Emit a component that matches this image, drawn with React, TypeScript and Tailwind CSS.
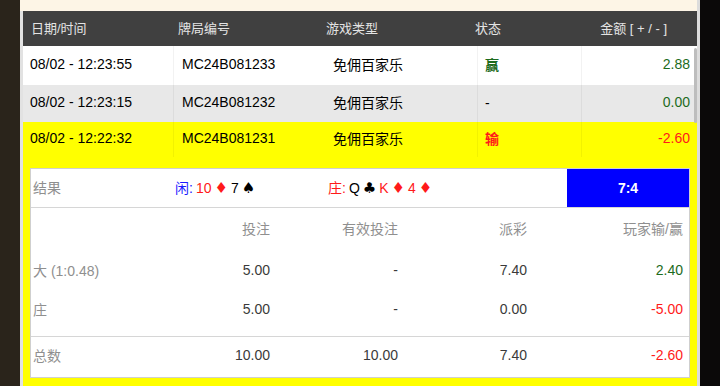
import React from "react";

const font = { fontFamily: '"Liberation Sans", Arial, "Noto Sans CJK SC", sans-serif' };

const rows = [
  { time: "08/02 - 12:23:55", id: "MC24B081233", game: "免佣百家乐", status: "赢", amount: "2.88", bg: "bg-white", statusCls: "text-[#1d6b1d] font-bold", amountCls: "text-[#1d6b1d]", h: "h-[39px]" },
  { time: "08/02 - 12:23:15", id: "MC24B081232", game: "免佣百家乐", status: "-", amount: "0.00", bg: "bg-[#e8e8e8]", statusCls: "text-black", amountCls: "text-[#1d6b1d]", h: "h-[37px]" },
  { time: "08/02 - 12:22:32", id: "MC24B081231", game: "免佣百家乐", status: "输", amount: "-2.60", bg: "bg-[#ffff00]", statusCls: "text-[#ff1a1a] font-bold", amountCls: "text-[#ff1a1a]", h: "h-[35px]" },
];

const bets = [
  { name: "大 (1:0.48)", stake: "5.00", valid: "-", payout: "7.40", win: "2.40", winCls: "text-[#1d6b1d]" },
  { name: "庄", stake: "5.00", valid: "-", payout: "0.00", win: "-5.00", winCls: "text-[#ff1a1a]" },
];

function Suit({ s, red }: { s: string; red?: boolean }) {
  return <span className={`text-[15px] leading-none ${red ? "text-[#ff1a1a]" : "text-black"}`} style={{ fontFamily: '"DejaVu Sans", sans-serif' }}>{s}</span>;
}

export default function App() {
  return (
    <div className="flex w-[720px] h-[386px] overflow-hidden bg-[#0b0909]" style={font}>
      <div className="w-[20px] shrink-0 bg-[#2a241b]" />
      <div className="w-[677px] shrink-0 flex flex-col">
        <div className="h-[11px] bg-[#fdf5e6]" />
        <div className="flex-1 border-l-[3px] border-[#e2e2e2] flex flex-col bg-[#ffff00] relative">
          {/* header */}
          <div className="h-[35px] bg-[#404040] text-[#e4e4e4] text-[13px] flex items-center">
            <div className="w-[147px] pl-[8px]">日期/时间</div>
            <div className="w-[148px] pl-[8px]">牌局编号</div>
            <div className="w-[149px] pl-[8px]">游戏类型</div>
            <div className="w-[100px] pl-[8px]">状态</div>
            <div className="flex-1 text-right pr-[30px]">金额 [ + / - ]</div>
          </div>

          {rows.map((r) => (
            <div key={r.id} className={`flex items-center text-[14px] text-black ${r.bg} ${r.h}`}>
              <div className="w-[151px] h-full flex items-center pl-[7px] pb-[3px] border-r border-black/5">{r.time}</div>
              <div className="w-[152px] h-full flex items-center pl-[8px] pb-[3px]">{r.id}</div>
              <div className="w-[152px] h-full flex items-center pl-[7px] pb-[1px] border-r border-black/5">{r.game}</div>
              <div className={`w-[104px] h-full flex items-center pl-[7px] pb-[1px] border-r border-black/5 ${r.statusCls}`}>{r.status}</div>
              <div className={`flex-1 h-full flex items-center justify-end pr-[7px] pb-[3px] ${r.amountCls}`}>{r.amount}</div>
            </div>
          ))}

          {/* expanded detail */}
          <div className="flex-1 pt-[11px] pl-[7px] pr-[7px] pb-[8px]">
            <div className="h-full bg-white border border-[#cfcfcf] flex flex-col text-[14px]">
              <div className="h-[39px] flex items-stretch border-b border-[#d6d6d6]">
                <div className="w-[140px] pl-[2px] flex items-center text-[#8f8f8f]">结果</div>
                <div className="w-[153px] pl-[4px] flex items-center gap-[3px]">
                  <span className="text-[#1a1aff]">闲:</span>
                  <span className="text-[#ff1a1a]">10</span>
                  <Suit s="♦" red />
                  <span className="text-black">7</span>
                  <Suit s="♠" />
                </div>
                <div className="flex-1 pl-[4px] flex items-center gap-[3px]">
                  <span className="text-[#ff1a1a]">庄:</span>
                  <span className="text-black">Q</span>
                  <Suit s="♣" />
                  <span className="text-[#ff1a1a]">K</span>
                  <Suit s="♦" red />
                  <span className="text-[#ff1a1a]">4</span>
                  <Suit s="♦" red />
                </div>
                <div className="w-[122px] bg-[#0000ff] text-white font-bold flex items-center justify-center">7:4</div>
              </div>

              <div className="grid grid-cols-[107px_130px_128px_129px_1fr] pl-[2px] pr-[6px] h-[42px] items-center text-[#8f8f8f]">
                <div />
                <div className="text-right">投注</div>
                <div className="text-right">有效投注</div>
                <div className="text-right">派彩</div>
                <div className="text-right">玩家输/赢</div>
              </div>

              {bets.map((b, i) => (
                <div key={b.name} className={`grid grid-cols-[107px_130px_128px_129px_1fr] pl-[2px] pr-[6px] items-center text-[#3a3a3a] ${i === 0 ? "h-[40px]" : "h-[39px]"}`}>
                  <div className="text-[#8f8f8f] pt-[2px]">{b.name}</div>
                  <div className="text-right">{b.stake}</div>
                  <div className="text-right">{b.valid}</div>
                  <div className="text-right">{b.payout}</div>
                  <div className={`text-right ${b.winCls}`}>{b.win}</div>
                </div>
              ))}

              <div className="flex-1 border-t border-[#d6d6d6] mt-[7px] grid grid-cols-[107px_130px_128px_129px_1fr] pl-[2px] pr-[6px] items-center text-[#3a3a3a] pb-[4px]">
                <div className="text-[#8f8f8f] pt-[2px]">总数</div>
                <div className="text-right">10.00</div>
                <div className="text-right">10.00</div>
                <div className="text-right">7.40</div>
                <div className="text-right text-[#ff1a1a]">-2.60</div>
              </div>
            </div>
          </div>

          {/* scrollbar thumb */}
          <div className="absolute right-0 top-[37px] w-[3px] h-[75px] rounded-full bg-[#bdbdbd]" />
        </div>
      </div>
      <div className="w-[3px] shrink-0 bg-[#dcdcdc]" />
      <div className="flex-1 bg-[#0b0909]" />
    </div>
  );
}
